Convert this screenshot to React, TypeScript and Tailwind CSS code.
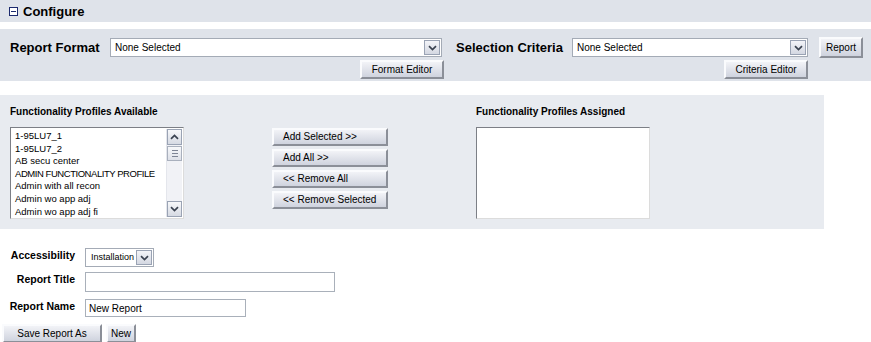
import React from 'react';

const font = { fontFamily: '"Liberation Sans", Arial, sans-serif' };

function Chevron({ up = false }: { up?: boolean }) {
  return (
    <svg width="9" height="6" viewBox="0 0 9 6" className={up ? 'rotate-180' : ''}>
      <path d="M1 1.2 L4.5 4.6 L8 1.2" fill="none" stroke="#3a4250" strokeWidth="1.7" />
    </svg>
  );
}

function DropArrow() {
  return (
    <span className="flex h-full w-[16px] items-center justify-center border border-[#9aa3b4] bg-gradient-to-b from-[#f3f4f8] to-[#d4d8e2]">
      <Chevron />
    </span>
  );
}

function Select({ width, value }: { width: string; value: string }) {
  return (
    <div
      className={`flex h-[19px] items-stretch border border-[#a4abb6] bg-white p-[1px] ${width}`}
    >
      <span className="flex-1 pl-[3px] text-[10px] leading-[15px] text-black">{value}</span>
      <DropArrow />
    </div>
  );
}

function Btn({ children, className = '' }: { children: React.ReactNode; className?: string }) {
  return (
    <button
      className={`border-2 border-t-[#fafbfd] border-l-[#fafbfd] border-b-[#8b8f98] border-r-[#8b8f98] bg-gradient-to-b from-[#f2f3f7] to-[#cfd3de] text-[10px] leading-none text-black ${className}`}
    >
      {children}
    </button>
  );
}

const profiles = [
  '1-95LU7_1',
  '1-95LU7_2',
  'AB secu center',
  'ADMIN FUNCTIONALITY PROFILE',
  'Admin with all recon',
  'Admin wo app adj',
  'Admin wo app adj fi',
];

export default function App() {
  return (
    <div className="h-[342px] w-[871px] overflow-hidden bg-white text-black" style={font}>
      {/* 상단 헤더 */}
      <div className="flex h-[22px] items-center bg-[#dfe3ea] pl-[9px]">
        <span className="relative flex h-[9px] w-[9px] items-center justify-center border border-[#1c2a6e] bg-white">
          <span className="h-px w-[5px] bg-[#1c2a6e]" />
        </span>
        <span className="ml-[5px] text-[13px] font-bold leading-none">Configure</span>
      </div>

      {/* 포맷 / 조건 */}
      <div className="mt-[7px] flex h-[52px] items-start bg-[#dfe3ea] pt-[9px]">
        <span className="ml-[10px] w-[100px] pt-[2px] text-[13px] font-bold leading-[15px]">Report Format</span>
        <div className="flex flex-col items-end">
          <Select width="w-[332px]" value="None Selected" />
          <Btn className="-mr-[2px] mt-[3px] h-[19px] w-[84px] text-center">Format Editor</Btn>
        </div>
        <span className="ml-[14px] w-[116px] pt-[2px] text-[13px] font-bold leading-[15px]">Selection Criteria</span>
        <div className="flex flex-col items-end">
          <Select width="w-[236px]" value="None Selected" />
          <Btn className="mt-[3px] h-[19px] w-[84px] text-center">Criteria Editor</Btn>
        </div>
        <Btn className="-mt-[1px] ml-[11px] h-[21px] w-[44px] text-center">Report</Btn>
      </div>

      {/* 기능 프로필 */}
      <div className="mt-[14px] flex h-[134px] w-[824px] bg-[#e8ebf0] pl-[10px] pt-[11px]">
        <div className="flex flex-col">
          <span className="text-[10px] font-bold leading-[12px]">Functionality Profiles Available</span>
          <div className="mt-[9px] flex h-[92px] w-[174px] border border-t-[#7c7f86] border-l-[#7c7f86] border-b-[#dcdcdc] border-r-[#dcdcdc] bg-white">
            <div className="flex flex-1 flex-col overflow-hidden pl-[4px] pt-[2px]">
              {profiles.map((p) => (
                <span
                  key={p}
                  className={`whitespace-nowrap text-[9.5px] leading-[12.6px] ${p === p.toUpperCase() && p.length > 12 ? 'tracking-[-0.45px]' : ''}`}
                >
                  {p}
                </span>
              ))}
            </div>
            <div className="my-[1px] mr-[1px] flex w-[16px] flex-col border-l border-[#e4e6ec] bg-[#f1f2f6]">
              <span className="flex h-[16px] items-center justify-center border border-[#9aa3b4] bg-gradient-to-b from-[#f7f8fa] to-[#d6dae3]">
                <Chevron up />
              </span>
              <span className="mt-[1px] flex h-[15px] flex-col items-center justify-center gap-[2px] border border-[#a9b0bd] bg-gradient-to-b from-[#f7f8fa] to-[#dde0e8]">
                <span className="h-px w-[6px] bg-[#7d8494]" />
                <span className="h-px w-[6px] bg-[#7d8494]" />
                <span className="h-px w-[6px] bg-[#7d8494]" />
              </span>
              <span className="flex-1" />
              <span className="flex h-[16px] items-center justify-center border border-[#9aa3b4] bg-gradient-to-b from-[#f7f8fa] to-[#d6dae3]">
                <Chevron />
              </span>
            </div>
          </div>
        </div>

        <div className="ml-[88px] mt-[22px] flex flex-col gap-[3px]">
          {['Add Selected >>', 'Add All >>', '<< Remove All', '<< Remove Selected'].map((t) => (
            <Btn key={t} className="h-[18px] w-[116px] pl-[9px] text-left">
              {t}
            </Btn>
          ))}
        </div>

        <div className="ml-[88px] flex flex-col">
          <span className="text-[10px] font-bold leading-[12px]">Functionality Profiles Assigned</span>
          <div className="mt-[9px] h-[92px] w-[174px] border border-t-[#7c7f86] border-l-[#7c7f86] border-b-[#dcdcdc] border-r-[#dcdcdc] bg-white" />
        </div>
      </div>

      {/* 리포트 정보 */}
      <div className="mt-[19px] grid grid-cols-[75px_auto] items-start gap-x-[10px]">
        <span className="pt-[1px] text-right text-[10.5px] font-bold leading-[13px]">Accessibility</span>
        <div className="flex h-[19px] w-[69px] items-stretch border border-[#a4abb6] bg-white p-[1px]">
          <span className="flex-1 whitespace-nowrap pl-[4px] text-[9px] leading-[15px]">Installation</span>
          <DropArrow />
        </div>

        <span className="mt-[5px] pt-[1px] text-right text-[10.5px] font-bold leading-[13px]">Report Title</span>
        <div className="mt-[5px] h-[20px] w-[250px] border border-[#a9b0ba] bg-white" />

        <span className="mt-[7px] pt-[1px] text-right text-[10.5px] font-bold leading-[13px]">Report Name</span>
        <div className="mt-[7px] flex h-[18px] w-[161px] items-center border border-[#a9b0ba] bg-white pl-[3px] text-[10px]">
          New Report
        </div>
      </div>
      <div className="mt-[7px] flex gap-[4px] pl-[2px]">
        <Btn className="h-[19px] w-[100px] text-center">Save Report As</Btn>
        <Btn className="h-[19px] w-[30px] text-center">New</Btn>
      </div>
    </div>
  );
}
